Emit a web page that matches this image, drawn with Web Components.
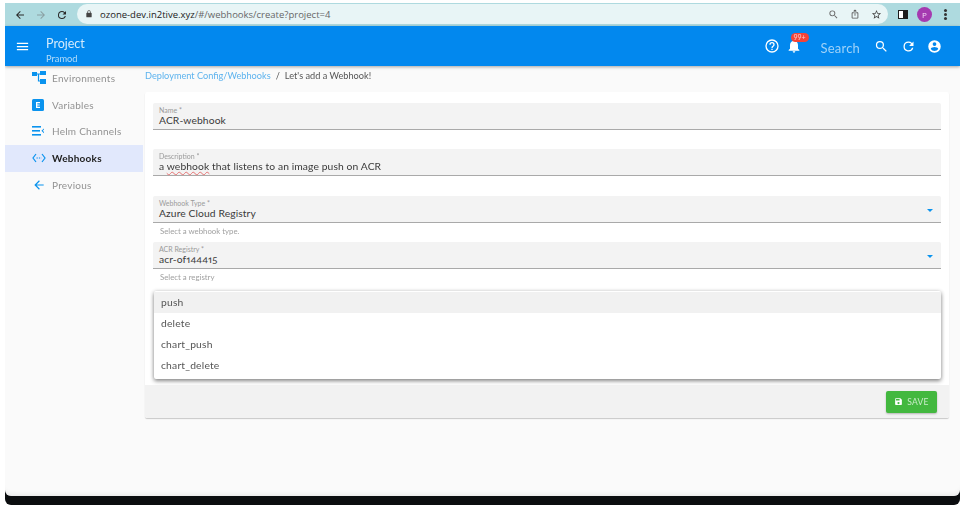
<!DOCTYPE html>
<html>
<head>
<meta charset="utf-8">
<title>Webhooks</title>
<style>
  html, body { margin: 0; padding: 0; background: #fff; }
  body { width: 966px; height: 512px; overflow: hidden; font-family: "Lato", "Open Sans", sans-serif; }
</style>
</head>
<body>
<app-window>
  <browser-bar slot="browser" url-host="ozone-dev.in2tive.xyz" url-path="/#/webhooks/create?project=4"></browser-bar>
  <app-bar slot="bar"></app-bar>
  <side-nav slot="side">
    <nav-item label="Environments" icon="env"></nav-item>
    <nav-item label="Variables" icon="var"></nav-item>
    <nav-item label="Helm Channels" icon="helm"></nav-item>
    <nav-item label="Webhooks" icon="hook" active="true"></nav-item>
    <nav-item label="Previous" icon="back"></nav-item>
  </side-nav>
  <bread-crumbs slot="crumbs" link="Deployment Config/Webhooks" current="Let's add a Webhook!"></bread-crumbs>
  <form-card slot="card">
    <form-field label="Name *" value="ACR-webhook"></form-field>
    <form-field label="Description *" value="a webhook that listens to an image push on ACR" gap="19" squiggle="true"></form-field>
    <form-field label="Webhook Type *" value="Azure Cloud Registry" hint="Select a webhook type." select="true" gap="20"></form-field>
    <form-field label="ACR Registry *" value="acr-of144415" hint="Select a registry" select="true" gap="4"></form-field>
    <pick-menu>
      <menu-row hover="true">push</menu-row>
      <menu-row>delete</menu-row>
      <menu-row>chart_push</menu-row>
      <menu-row>chart_delete</menu-row>
    </pick-menu>
  </form-card>
</app-window>

<script>
const ICONS = {
  back: 'M20 11H7.83l5.59-5.59L12 4l-8 8 8 8 1.41-1.41L7.83 13H20v-2z',
  forward: 'M12 4l-1.41 1.41L16.17 11H4v2h12.17l-5.58 5.59L12 20l8-8z',
  reload: 'M17.65 6.35A7.96 7.96 0 0 0 12 4a8 8 0 1 0 7.73 10h-2.08A6 6 0 1 1 12 6c1.66 0 3.14.69 4.22 1.78L13 11h7V4l-2.35 2.35z',
  lock: 'M18 8h-1V6A5 5 0 0 0 7 6v2H6a2 2 0 0 0-2 2v10a2 2 0 0 0 2 2h12a2 2 0 0 0 2-2V10a2 2 0 0 0-2-2zM9 6a3 3 0 0 1 6 0v2H9V6z',
  search: 'M15.5 14h-.79l-.28-.27A6.47 6.47 0 0 0 16 9.5 6.5 6.5 0 1 0 9.5 16c1.61 0 3.09-.59 4.23-1.57l.27.28v.79l5 4.99L20.49 19l-4.99-5zm-6 0A4.5 4.5 0 1 1 14 9.5 4.49 4.49 0 0 1 9.5 14z',
  share: 'M16 5l-1.42 1.42-1.59-1.59V16h-2V4.83L9.42 6.42 8 5l4-4 4 4zm4 5v11a2 2 0 0 1-2 2H6a2 2 0 0 1-2-2V10a2 2 0 0 1 2-2h3v2H6v11h12V10h-3V8h3a2 2 0 0 1 2 2z',
  star: 'M22 9.24l-7.19-.62L12 2 9.19 8.63 2 9.24l5.46 4.73L5.82 21 12 17.27 18.18 21l-1.63-7.03L22 9.24zM12 15.4l-3.76 2.27 1-4.28-3.32-2.88 4.38-.38L12 6.1l1.71 4.04 4.38.38-3.32 2.88 1 4.28L12 15.4z',
  menu: 'M3 18h18v-2H3v2zm0-5h18v-2H3v2zm0-7v2h18V6H3z',
  help: 'M11 18h2v-2h-2v2zm1-16a10 10 0 1 0 0 20 10 10 0 0 0 0-20zm0 18a8 8 0 1 1 0-16 8 8 0 0 1 0 16zm0-14a4 4 0 0 0-4 4h2a2 2 0 0 1 4 0c0 2-3 1.75-3 5h2c0-2.25 3-2.5 3-5a4 4 0 0 0-4-4z',
  bell: 'M12 22a2 2 0 0 0 2-2h-4a2 2 0 0 0 2 2zm6-6v-5c0-3.07-1.64-5.64-4.5-6.32V4a1.5 1.5 0 0 0-3 0v.68C7.63 5.36 6 7.92 6 11v5l-2 2v1h16v-1l-2-2z',
  account: 'M12 2a10 10 0 1 0 0 20 10 10 0 0 0 0-20zm0 3a3 3 0 1 1 0 6 3 3 0 0 1 0-6zm0 14.2a7.2 7.2 0 0 1-6-3.22c.03-1.99 4-3.08 6-3.08s5.97 1.09 6 3.08a7.2 7.2 0 0 1-6 3.22z',
  save: 'M17 3H5a2 2 0 0 0-2 2v14a2 2 0 0 0 2 2h14a2 2 0 0 0 2-2V7l-4-4zm-5 16a3 3 0 1 1 0-6 3 3 0 0 1 0 6zm3-10H5V5h10v4z'
};

function svgIcon(name, size, color) {
  return `<svg width="${size}" height="${size}" viewBox="0 0 24 24" fill="${color}"><path d="${ICONS[name]}"/></svg>`;
}

class AppWindow extends HTMLElement {
  constructor() {
    super();
    this.attachShadow({ mode: 'open' });
    this.shadowRoot.innerHTML = `
    <style>
      :host { display: block; width: 966px; height: 512px; box-sizing: border-box; padding: 3px 6px 0 5px; }
      #win { height: 502px; display: flex; flex-direction: column; background: #0b0d0f; border-radius: 0 0 6px 6px; overflow: hidden; filter: blur(.4px); }
      #page { flex: 1; display: flex; background: #fafafa; border-radius: 0 0 6px 6px; margin-bottom: 9px; box-shadow: inset 0 -6px 6px -6px #ddd; min-height: 0; }
      #main { flex: 1; padding: 3px 11px 0 2px; min-width: 0; }
    </style>
    <div id="win">
      <slot name="browser"></slot>
      <slot name="bar"></slot>
      <div id="page">
        <slot name="side"></slot>
        <div id="main">
          <slot name="crumbs"></slot>
          <slot name="card"></slot>
        </div>
      </div>
    </div>`;
  }
}

class BrowserBar extends HTMLElement {
  constructor() {
    super();
    this.attachShadow({ mode: 'open' });
    this.shadowRoot.innerHTML = `
    <style>
      :host { display: flex; align-items: center; height: 23px; background: #aedadf; color: #333; font: 9.5px "Open Sans", sans-serif; }
      .nav { display: flex; align-items: center; gap: 9px; padding: 0 0 0 9px; width: 63px; }
      .nav svg { display: block; }
      #pill { flex: 1; height: 20px; margin-top: -1px; background: #e8f5f6; border-radius: 10px; display: flex; align-items: center; padding: 0 6px 0 8px; gap: 5px; }
      #url { flex: 1; white-space: nowrap; color: #666; padding-left: 2px; }
      #url b { font-weight: 400; color: #222; }
      .tools { display: flex; gap: 11px; align-items: center; }
      #end { display: flex; align-items: center; width: 72px; padding-left: 10px; box-sizing: border-box; gap: 9px; }
      #panel { width: 10px; height: 9px; border: 1.5px solid #1b1b1b; box-sizing: border-box; background: linear-gradient(90deg, #fff 50%, #1b1b1b 50%); }
      #avatar { width: 15px; height: 15px; border-radius: 50%; background: #a53ab0; color: #f3d9f5; font-size: 8px; display: flex; align-items: center; justify-content: center; }
      #dots { width: 3px; height: 3px; margin-left: 3px; border-radius: 50%; background: #333; box-shadow: 0 -4px #333, 0 4px #333; }
    </style>
    <div class="nav">
      ${svgIcon('back', 12, '#2a2a2a')}${svgIcon('forward', 12, '#8aa0a3')}${svgIcon('reload', 12, '#2a2a2a')}
    </div>
    <div id="pill">
      ${svgIcon('lock', 8, '#444')}
      <span id="url"><b>${this.getAttribute('url-host')}</b>${this.getAttribute('url-path')}</span>
      <span class="tools">${svgIcon('search', 11, '#666')}${svgIcon('share', 10, '#555')}${svgIcon('star', 11, '#444')}</span>
    </div>
    <div id="end"><span id="panel"></span><span id="avatar">P</span><span id="dots"></span></div>`;
  }
}

class AppBar extends HTMLElement {
  constructor() {
    super();
    this.attachShadow({ mode: 'open' });
    this.shadowRoot.innerHTML = `
    <style>
      :host { display: flex; align-items: center; height: 40px; background: #0288ee; color: #fff; box-shadow: 0 1px 3px rgba(0,0,0,.35); position: relative; z-index: 2; }
      #burger { display: flex; padding: 0 0 0 10px; width: 31px; }
      #title { flex: 1; display: flex; flex-direction: column; color: #d5ebfc; padding-top: 9px; }
      #title span:first-child { font-size: 12.5px; line-height: 15px; }
      #title span:last-child { font-size: 9.3px; line-height: 13px; margin-top: 1px; color: #b5dcf9; }
      #tools { display: flex; align-items: center; padding-right: 18px; }
      #tools svg { display: block; }
      #bell { position: relative; margin-left: 6px; display: flex; }
      #badge { position: absolute; left: 5px; top: -5px; width: 18px; height: 9px; border-radius: 5px; background: #f44336; color: #fbd0cc; font-size: 7px; line-height: 9px; text-align: center; }
      #find { color: #9fd2f8; font-size: 13px; margin: 3px 14px 0 19px; letter-spacing: .2px; }
    </style>
    <div id="burger">${svgIcon('menu', 15, '#fff')}</div>
    <div id="title"><span>Project</span><span>Pramod</span></div>
    <div id="tools">
      ${svgIcon('help', 16, '#fff')}
      <span id="bell">${svgIcon('bell', 16, '#fff')}<span id="badge">99+</span></span>
      <span id="find">Search</span>
      ${svgIcon('search', 15, '#fff')}
      <span style="width:12px"></span>
      ${svgIcon('reload', 15, '#fff')}
      <span style="width:11px"></span>
      ${svgIcon('account', 15, '#fff')}
    </div>`;
  }
}

class SideNav extends HTMLElement {
  constructor() {
    super();
    this.attachShadow({ mode: 'open' });
    this.shadowRoot.innerHTML = `
    <style>
      :host { display: flex; flex-direction: column; width: 138px; flex: none; margin-top: -1.5px; }
    </style>
    <slot></slot>`;
  }
}

const NAV_GLYPHS = {
  env: `<svg width="15" height="13" viewBox="0 0 15 13"><rect x="0" y="1" width="5" height="4" fill="#0a93ee"/><rect x="8" y="0" width="6" height="4" fill="#0a93ee"/><rect x="8" y="8" width="6" height="5" fill="#0a93ee"/><path d="M5 3h3M6.5 3v7H8" stroke="#0a93ee" stroke-width="1.2" fill="none"/></svg>`,
  var: `<svg width="12" height="12" viewBox="0 0 12 12"><rect width="12" height="12" rx="1.5" fill="#0a93ee"/><path d="M4 3h4v1.2H5.3v1.2H7.7v1.2H5.3v1.2H8V9H4z" fill="#fff"/></svg>`,
  helm: `<svg width="12" height="10" viewBox="0 0 12 10" fill="#0a93ee"><rect y="0" width="9" height="1.6"/><rect y="4" width="8" height="1.6"/><rect y="8" width="9" height="1.6"/><path d="M12 2.4 9.4 4.8 12 7.2V6L10.8 4.8 12 3.6z"/></svg>`,
  hook: `<svg width="14" height="10" viewBox="0 0 14 10" fill="none" stroke="#0a93ee" stroke-width="1.2"><path d="M4 1 1 5l3 4M10 1l3 4-3 4"/><path d="M4.5 5h5" stroke-dasharray="1.3 1.1"/></svg>`,
  back: svgIcon('back', 14, '#0a93ee')
};

class NavItem extends HTMLElement {
  constructor() {
    super();
    this.attachShadow({ mode: 'open' });
    const on = this.getAttribute('active') === 'true';
    this.shadowRoot.innerHTML = `
    <style>
      :host { display: flex; align-items: center; height: 26.75px; font-size: 10px; letter-spacing: .25px; color: ${on ? '#222' : '#929292'}; font-weight: ${on ? 700 : 400}; background: ${on ? '#e1e8fc' : 'transparent'}; }
      #ico { width: 47px; padding-left: 27px; box-sizing: border-box; display: flex; justify-content: flex-start; }
      #ico svg { display: block; }
    </style>
    <span id="ico">${NAV_GLYPHS[this.getAttribute('icon')]}</span>
    <span>${this.getAttribute('label')}</span>`;
  }
}

class BreadCrumbs extends HTMLElement {
  constructor() {
    super();
    this.attachShadow({ mode: 'open' });
    this.shadowRoot.innerHTML = `
    <style>
      :host { display: flex; align-items: center; height: 16px; font-size: 9.2px; color: #555; gap: 5px; margin-bottom: 9px; margin-top: -2px; }
      a { color: #5db3ee; }
    </style>
    <a>${this.getAttribute('link')}</a><span>/</span><span>${this.getAttribute('current')}</span>`;
  }
}

class FormCard extends HTMLElement {
  constructor() {
    super();
    this.attachShadow({ mode: 'open' });
    this.shadowRoot.innerHTML = `
    <style>
      :host { display: block; width: 804px; background: #fff; border-radius: 2px; box-shadow: 0 1px 1px rgba(0,0,0,.2); }
      #fields { padding: 11px 8px 0; height: 293px; box-sizing: border-box; }
      #foot { height: 33px; background: #f2f2f2; display: flex; align-items: center; justify-content: flex-end; padding-right: 12px; border-radius: 0 0 2px 2px; }
      button { display: flex; align-items: center; gap: 4px; justify-content: center; width: 51px; height: 22px; border: 0; border-radius: 2px; background: #43b83f; color: #c9ebc8; font: 8.5px "Lato", sans-serif; letter-spacing: .3px; box-shadow: 0 1px 2px rgba(0,0,0,.25); padding: 0; }
    </style>
    <div id="fields"><slot></slot></div>
    <div id="foot"><button>${svgIcon('save', 9, '#fff')}SAVE</button></div>`;
  }
}

class FormField extends HTMLElement {
  constructor() {
    super();
    this.attachShadow({ mode: 'open' });
    const hint = this.getAttribute('hint');
    const select = this.getAttribute('select') === 'true';
    let val = this.getAttribute('value');
    if (this.getAttribute('squiggle') === 'true') {
      val = val.replace('webhook', '<u>webhook</u>');
    }
    this.shadowRoot.innerHTML = `
    <style>
      :host { display: block; margin-top: ${this.getAttribute('gap') || 0}px; }
      #box { position: relative; height: 27px; box-sizing: border-box; background: #f3f3f3; border-bottom: 1px solid #a9a9a9; border-radius: 2px 2px 0 0; padding: 3px 6px 0; }
      label { display: block; font-size: 7px; line-height: 9px; color: #9a9a9a; }
      #val { font-size: 10.3px; line-height: 13px; margin-top: -1px; color: #3a3a3a; letter-spacing: .1px; white-space: nowrap; font-variant-numeric: oldstyle-nums proportional-nums; }
      u { text-decoration: underline wavy #e57373 1px; text-underline-offset: 1px; }
      #arrow { position: absolute; right: 8px; top: 13px; width: 0; height: 0; border: 3px solid transparent; border-top: 3.5px solid #0a93ee; border-bottom: 0; }
      #hint { font-size: 7.8px; line-height: 9px; color: #a0a0a0; padding: 4px 7px 0; height: 15px; box-sizing: border-box; }
    </style>
    <div id="box"><label>${this.getAttribute('label')}</label><div id="val">${val}</div>${select ? '<span id="arrow"></span>' : ''}</div>
    ${hint ? `<div id="hint">${hint}</div>` : ''}`;
  }
}

class PickMenu extends HTMLElement {
  constructor() {
    super();
    this.attachShadow({ mode: 'open' });
    this.shadowRoot.innerHTML = `
    <style>
      :host { display: block; position: relative; height: 88px; margin-top: 7px; margin-left: 1px; }
      #sheet { position: absolute; inset: 0; background: #fff; border-radius: 2px; padding: 1px 0; box-sizing: border-box; box-shadow: 0 2px 4px rgba(0,0,0,.45), 0 0 4px rgba(0,0,0,.12); }
    </style>
    <div id="sheet"><slot></slot></div>`;
  }
}

class MenuRow extends HTMLElement {
  constructor() {
    super();
    this.attachShadow({ mode: 'open' });
    this.shadowRoot.innerHTML = `
    <style>
      :host { display: flex; align-items: center; height: 21px; box-sizing: border-box; padding: 0 0 2px 7px; font-size: 10.3px; color: #555; letter-spacing: .2px; background: ${this.getAttribute('hover') === 'true' ? '#f1f1f1' : 'transparent'}; }
    </style>
    <slot></slot>`;
  }
}

customElements.define('app-window', AppWindow);
customElements.define('browser-bar', BrowserBar);
customElements.define('app-bar', AppBar);
customElements.define('side-nav', SideNav);
customElements.define('nav-item', NavItem);
customElements.define('bread-crumbs', BreadCrumbs);
customElements.define('form-card', FormCard);
customElements.define('form-field', FormField);
customElements.define('pick-menu', PickMenu);
customElements.define('menu-row', MenuRow);
</script>
</body>
</html>
